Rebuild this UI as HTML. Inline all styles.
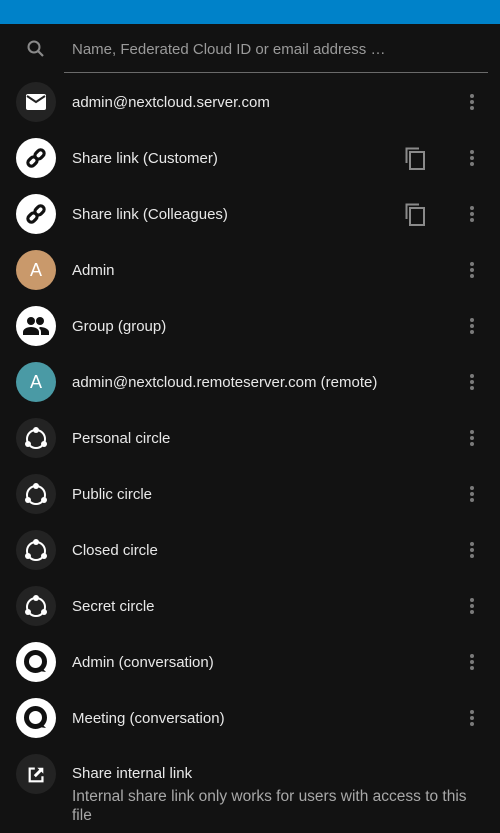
<!DOCTYPE html>
<html><head><style>
body{margin:0;width:500px;height:833px;background:#121212;font-family:"Liberation Sans",sans-serif;overflow:hidden;position:relative}
.top{position:absolute;left:0;top:0;width:500px;height:24px;background:#0082c9}
.search{position:absolute;left:72px;top:41px;font-size:15px;color:#9a9a9a}
.line{position:absolute;left:64px;top:72px;width:424px;height:1px;background:#6a6a6a}
.row{position:absolute;left:0;width:500px;height:56px}
.av{position:absolute;left:16px;top:8px;width:40px;height:40px;border-radius:50%;background:#232323;display:flex;align-items:center;justify-content:center}
.av.w{background:#fff}
.t{position:absolute;left:72px;top:20px;font-size:15px;color:#e8e8e8}
.dots{position:absolute;left:470px;top:20px;width:4px}
.dots i{display:block;width:4px;height:4px;border-radius:50%;background:#7a7a7a;margin-bottom:2px}
.copy{position:absolute;left:405px;top:17px}
.letter{color:#fff;font-size:18px}
</style></head><body>
<div class="top"></div>
<svg style="position:absolute;left:26px;top:39px" width="20" height="20" viewBox="0 0 20 20"><circle cx="8" cy="8" r="5.5" fill="none" stroke="#8a8a8a" stroke-width="2"/><path d="M12 12l5 5" stroke="#8a8a8a" stroke-width="2.2"/></svg>
<div class="search">Name, Federated Cloud ID or email address …</div>
<div class="line"></div>

<div class="row" style="top:74px"><div class="av"><svg width="20" height="16" viewBox="0 0 20 16"><rect x="0" y="0" width="20" height="16" rx="2" fill="#fff"/><path d="M1 2l9 6 9-6" fill="none" stroke="#232323" stroke-width="2"/></svg></div><div class="t">admin@nextcloud.server.com</div><div class="dots"><i></i><i></i><i></i></div></div>

<div class="row" style="top:130px"><div class="av w"><svg width="24" height="24" viewBox="0 0 24 24"><g transform="rotate(-45 12 12)" fill="none" stroke="#111" stroke-width="3.2"><rect x="2" y="8.5" width="10" height="7" rx="3.5"/><rect x="12" y="8.5" width="10" height="7" rx="3.5"/></g></svg></div><div class="t">Share link (Customer)</div><svg class="copy" width="22" height="24" viewBox="0 0 22 24"><path d="M1.5 16V1.5H14" fill="none" stroke="#8a8a8a" stroke-width="2"/><rect x="5" y="5" width="14" height="17" fill="none" stroke="#8a8a8a" stroke-width="2"/></svg><div class="dots"><i></i><i></i><i></i></div></div>

<div class="row" style="top:186px"><div class="av w"><svg width="24" height="24" viewBox="0 0 24 24"><g transform="rotate(-45 12 12)" fill="none" stroke="#111" stroke-width="3.2"><rect x="2" y="8.5" width="10" height="7" rx="3.5"/><rect x="12" y="8.5" width="10" height="7" rx="3.5"/></g></svg></div><div class="t">Share link (Colleagues)</div><svg class="copy" width="22" height="24" viewBox="0 0 22 24"><path d="M1.5 16V1.5H14" fill="none" stroke="#8a8a8a" stroke-width="2"/><rect x="5" y="5" width="14" height="17" fill="none" stroke="#8a8a8a" stroke-width="2"/></svg><div class="dots"><i></i><i></i><i></i></div></div>

<div class="row" style="top:242px"><div class="av" style="background:#c9996b"><span class="letter">A</span></div><div class="t">Admin</div><div class="dots"><i></i><i></i><i></i></div></div>

<div class="row" style="top:298px"><div class="av w"><svg width="26" height="20" viewBox="0 0 26 20"><circle cx="8" cy="5" r="4" fill="#111"/><circle cx="17" cy="5" r="4" fill="#111"/><path d="M0 19v-3c0-3 4-5 8-5s8 2 8 5v3z" fill="#111"/><path d="M17 11c4 0 9 2 9 5v3h-8v-3c0-2-1-3-2-4z" fill="#111"/></svg></div><div class="t">Group (group)</div><div class="dots"><i></i><i></i><i></i></div></div>

<div class="row" style="top:354px"><div class="av" style="background:#4a9aa5"><span class="letter">A</span></div><div class="t">admin@nextcloud.remoteserver.com (remote)</div><div class="dots"><i></i><i></i><i></i></div></div>

<div class="row" style="top:410px"><div class="av"><svg width="26" height="26" viewBox="0 0 26 26"><circle cx="13" cy="14" r="9" fill="none" stroke="#fff" stroke-width="2"/><circle cx="13" cy="5" r="3" fill="#fff"/><circle cx="5" cy="19" r="3" fill="#fff"/><circle cx="21" cy="19" r="3" fill="#fff"/></svg></div><div class="t">Personal circle</div><div class="dots"><i></i><i></i><i></i></div></div>

<div class="row" style="top:466px"><div class="av"><svg width="26" height="26" viewBox="0 0 26 26"><circle cx="13" cy="14" r="9" fill="none" stroke="#fff" stroke-width="2"/><circle cx="13" cy="5" r="3" fill="#fff"/><circle cx="5" cy="19" r="3" fill="#fff"/><circle cx="21" cy="19" r="3" fill="#fff"/></svg></div><div class="t">Public circle</div><div class="dots"><i></i><i></i><i></i></div></div>

<div class="row" style="top:522px"><div class="av"><svg width="26" height="26" viewBox="0 0 26 26"><circle cx="13" cy="14" r="9" fill="none" stroke="#fff" stroke-width="2"/><circle cx="13" cy="5" r="3" fill="#fff"/><circle cx="5" cy="19" r="3" fill="#fff"/><circle cx="21" cy="19" r="3" fill="#fff"/></svg></div><div class="t">Closed circle</div><div class="dots"><i></i><i></i><i></i></div></div>

<div class="row" style="top:578px"><div class="av"><svg width="26" height="26" viewBox="0 0 26 26"><circle cx="13" cy="14" r="9" fill="none" stroke="#fff" stroke-width="2"/><circle cx="13" cy="5" r="3" fill="#fff"/><circle cx="5" cy="19" r="3" fill="#fff"/><circle cx="21" cy="19" r="3" fill="#fff"/></svg></div><div class="t">Secret circle</div><div class="dots"><i></i><i></i><i></i></div></div>

<div class="row" style="top:634px"><div class="av w"><svg width="28" height="28" viewBox="0 0 28 28"><circle cx="13.5" cy="13.5" r="9" fill="none" stroke="#111" stroke-width="5"/><path d="M18 18l6 6-7-1z" fill="#111"/></svg></div><div class="t">Admin (conversation)</div><div class="dots"><i></i><i></i><i></i></div></div>

<div class="row" style="top:690px"><div class="av w"><svg width="28" height="28" viewBox="0 0 28 28"><circle cx="13.5" cy="13.5" r="9" fill="none" stroke="#111" stroke-width="5"/><path d="M18 18l6 6-7-1z" fill="#111"/></svg></div><div class="t">Meeting (conversation)</div><div class="dots"><i></i><i></i><i></i></div></div>

<div class="row" style="top:746px"><div class="av" style="top:8px"><svg width="17" height="17" viewBox="0 0 20 20"><path d="M8 3H2v15h15v-6" fill="none" stroke="#fff" stroke-width="2.6"/><path d="M11 2h7v7z" fill="#fff"/><path d="M16 4l-8 8" stroke="#fff" stroke-width="3.4"/></svg></div>
<div class="t" style="top:19px">Share internal link</div>
<div style="position:absolute;left:72px;top:41px;width:412px;font-size:15.5px;line-height:19px;color:#a8a8a8">Internal share link only works for users with access to this file</div></div>
</body></html>
